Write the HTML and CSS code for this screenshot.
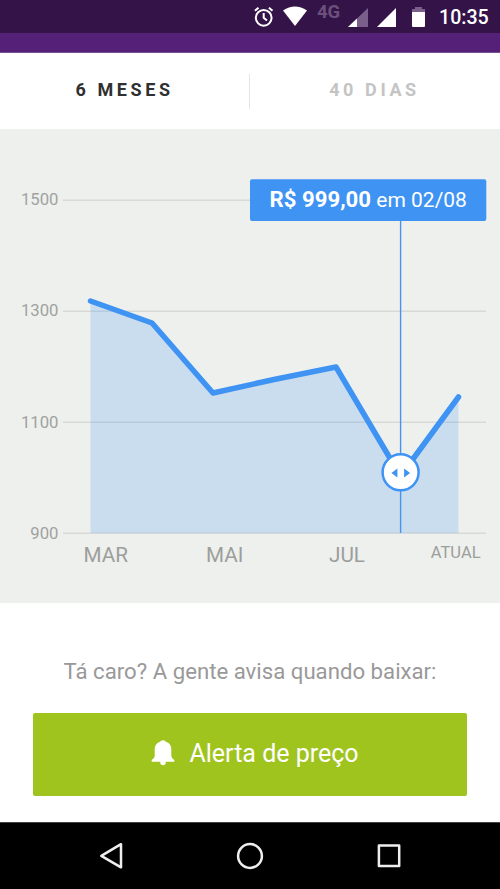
FILE: index.html
```html
<!DOCTYPE html>
<html lang="pt-BR">
<head>
<meta charset="utf-8">
<title>Histórico de preço</title>
<link rel="stylesheet" href="styles.css">
</head>
<body>
<header class="status">
  <svg class="alarm" width="22" height="22" viewBox="0 0 22 22"><circle cx="10.7" cy="11.8" r="7.9"/><path d="M10.7 7V11.8l3.3 2.7M1.9 4.8 5.5 1.7M19.5 4.8l-3.6-3.1"/></svg>
  <svg class="wifi" width="24" height="20" viewBox="0 0 24 20"><path d="M0 4.4Q12-3.4 24 4.4L12 20Z"/></svg>
  <span class="network">4G</span>
  <svg class="signal" width="20" height="19" viewBox="0 0 20 19"><path class="dim" d="M20 0v19H0Z"/><path d="M9 10.4V19H0Z"/></svg>
  <svg class="signal-full" width="19" height="19" viewBox="0 0 19 19"><path d="M19 0v19H0Z"/></svg>
  <svg class="battery" width="13" height="20" viewBox="0 0 13 20"><path class="dim" d="M3 0h7v2h3v4H0V2h3Z"/><path d="M0 5h13v14q0 1-1 1H1q-1 0-1-1Z"/></svg>
  <time class="clock">10:35</time>
</header>
<div class="appbar"></div>
<nav class="tabs">
  <a class="tab active">6 MESES</a>
  <a class="tab">40 DIAS</a>
</nav>
<section class="chart">
  <svg width="500" height="474" viewBox="0 129 500 474">
    <path class="grid" d="M63 200.3H486M63 311.3H486M63 422.3H486M63 533.3H486"/>
    <g class="y-labels">
      <text x="58.5" y="205.3">1500</text>
      <text x="58.5" y="316.3">1300</text>
      <text x="58.5" y="427.5">1100</text>
      <text x="58.5" y="538.5">900</text>
    </g>
    <path class="area" d="M90.5 301 152 323 213 393 274 379.5 336 367 400.5 472 458.5 397V533H90.5Z"/>
    <path class="line" d="M90.5 301 152 323 213 393 274 379.5 336 367 400.5 476 458.5 397"/>
    <path class="marker" d="M400.6 220V533"/>
    <circle class="handle" cx="400.6" cy="472.3" r="18"/>
    <path class="arrows" d="M397.4 468.6v9l-6-4.5ZM404.1 468.6v9l6-4.5Z"/>
    <g class="x-labels">
      <text x="83.5" y="561.5">MAR</text>
      <text x="206" y="561.5">MAI</text>
      <text x="329" y="561.5">JUL</text>
      <text class="current" x="430.8" y="558.2">ATUAL</text>
    </g>
    <rect class="tip" x="250" y="179.3" width="236.3" height="41.7" rx="2"/>
    <text class="tip-text" x="269.5" y="207.3"><tspan class="price">R$ 999,00</tspan> em 02/08</text>
  </svg>
</section>
<main class="alert">
  <p class="question">Tá caro? A gente avisa quando baixar:</p>
  <button class="button">
    <svg width="24" height="26" viewBox="0 0 24 26"><path d="M9.2 1.8Q9.2.3 12 .3t2.8 1.5Q20.3 3.5 20.3 9.5V16Q20.3 18.3 23.3 20V21.8H14.8Q14.8 25.2 12 25.2T9.2 21.8H.7V20Q3.7 18.3 3.7 16V9.5Q3.7 3.5 9.2 1.8Z"/></svg>
    <span>Alerta de preço</span>
  </button>
</main>
<footer class="navbar">
  <svg width="24" height="28" viewBox="0 0 24 28"><path d="M22 2.2V25.3L2.3 13.8Z"/></svg>
  <svg width="28" height="28" viewBox="0 0 28 28"><circle cx="14" cy="14" r="11.9"/></svg>
  <svg width="24" height="24" viewBox="0 0 24 24"><rect x="1.9" y="1.6" width="20.3" height="20.3"/></svg>
</footer>
</body>
</html>
```
FILE: styles.css
```css
* { box-sizing: border-box; }
body {
  margin: 0;
  width: 500px;
  height: 889px;
  overflow: hidden;
  display: flex;
  flex-direction: column;
  background: #fff;
  font-family: Roboto, sans-serif;
}
svg { display: block; flex: none; }
.status {
  height: 33px;
  padding: 6px 0 0 253px;
  display: flex;
  align-items: flex-start;
  background: #341348;
  color: #fff;
  fill: #fff;
}
.alarm { fill: none; stroke: #fff; stroke-width: 2; }
.wifi { margin-left: 8px; }
.network {
  width: 25px;
  margin-left: 10px;
  margin-top: -4px;
  font-size: 18.5px;
  line-height: 21px;
  font-weight: 700;
  color: #6b507c;
}
.signal { margin: 2px 0 0 6px; }
.signal-full { margin: 2px 0 0 9px; }
.battery { margin: 1px 0 0 16px; }
.dim { fill: #7a5f8a; }
.clock {
  margin-left: 14px;
  font-size: 19.6px;
  line-height: 23px;
  font-weight: 500;
}
.appbar { height: 20px; background: #552178; border-bottom: 1px solid #76508f; }
.tabs { height: 76px; display: flex; align-items: center; }
.tab {
  width: 249px;
  height: 35px;
  line-height: 32px;
  text-align: center;
  font-size: 18px;
  font-weight: 700;
  letter-spacing: 3.6px;
  color: #c4c4c4;
}
.tab.active { width: 250px; color: #303030; border-right: 1px solid #e5e5e5; }
.chart { height: 474px; background: #eef0ed; }
.grid { stroke: #d7d9d7; stroke-width: 1.5; }
.y-labels { font-size: 16.7px; fill: #a0a2a0; text-anchor: end; }
.x-labels { font-size: 20.7px; fill: #9c9e9c; }
.x-labels .current { font-size: 16.5px; }
.area { fill: #3e93f3; fill-opacity: .2; }
.line { fill: none; stroke: #3e93f3; stroke-width: 5.5; stroke-linecap: round; stroke-linejoin: round; }
.marker { stroke: #4694ed; stroke-width: 1.4; }
.handle { fill: #fff; stroke: #3e93f3; stroke-width: 2.5; }
.arrows, .tip { fill: #3e93f3; }
.tip-text { fill: #fff; font-size: 21px; }
.price { font-size: 22.2px; font-weight: 700; }
.alert { flex: 1; padding: 54px 33px 0; }
.question {
  margin: 0 0 28px;
  line-height: 28px;
  font-size: 22.2px;
  text-align: center;
  white-space: nowrap;
  color: #999;
}
.button {
  width: 434px;
  height: 83px;
  padding: 0 0 3px 10px;
  display: flex;
  align-items: center;
  justify-content: center;
  gap: 14px;
  border: 0;
  border-radius: 2px;
  background: #a0c41e;
  color: #fff;
  fill: #fff;
  font: 25px Roboto, sans-serif;
}
.navbar {
  height: 67px;
  padding: 0 99px;
  display: flex;
  align-items: center;
  justify-content: space-between;
  background: #000;
  border-top: 1px solid #444;
  fill: none;
  stroke: #eee;
  stroke-width: 2.5;
  stroke-linejoin: round;
}
```
